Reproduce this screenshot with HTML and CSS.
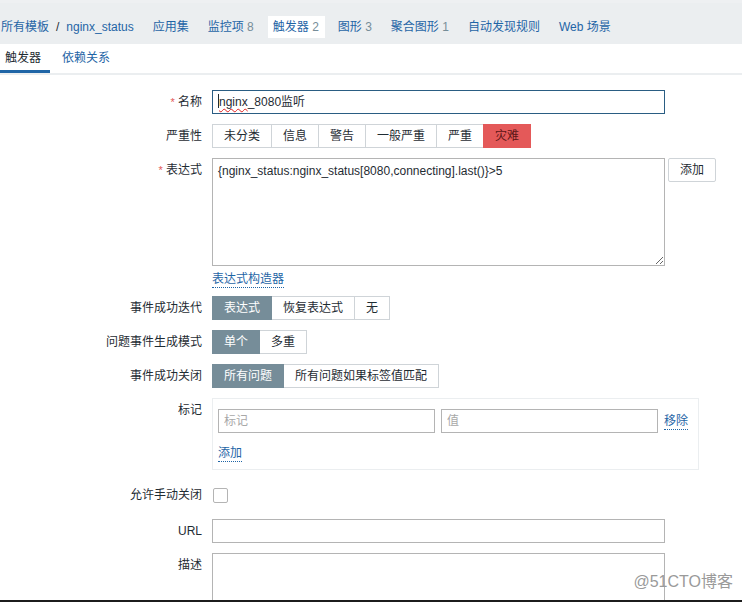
FILE: index.html
```html
<!DOCTYPE html>
<html lang="zh-CN">
<head>
<meta charset="utf-8">
<title>触发器</title>
<link rel="stylesheet" href="styles.css">
</head>
<body>
<div class="page">
  <header class="topnav">
    <a class="crumb">所有模板</a><span class="sep">/</span><a class="crumb">nginx_status</a>
    <a class="nav-item">应用集</a>
    <a class="nav-item">监控项 <span class="count">8</span></a>
    <a class="nav-item active">触发器 <span class="count">2</span></a>
    <a class="nav-item">图形 <span class="count">3</span></a>
    <a class="nav-item">聚合图形 <span class="count">1</span></a>
    <a class="nav-item">自动发现规则</a>
    <a class="nav-item">Web 场景</a>
  </header>

  <nav class="subtabs">
    <span class="subtab current">触发器</span>
    <a class="subtab">依赖关系</a>
  </nav>

  <form class="form">
    <div class="row">
      <label class="lbl"><span class="req">*</span> 名称</label>
      <div class="field">
        <div class="input focused"><span class="caret"></span><span class="misspelled">nginx</span>_8080监听</div>
      </div>
    </div>

    <div class="row">
      <label class="lbl">严重性</label>
      <div class="field">
        <div class="seg">
          <span class="seg-btn">未分类</span><span class="seg-btn">信息</span><span class="seg-btn">警告</span><span class="seg-btn">一般严重</span><span class="seg-btn">严重</span><span class="seg-btn disaster">灾难</span>
        </div>
      </div>
    </div>

    <div class="row row-expr">
      <label class="lbl"><span class="req">*</span> 表达式</label>
      <div class="field">
        <div class="expr-line">
          <textarea class="textarea expr">{nginx_status:nginx_status[8080,connecting].last()}>5</textarea>
          <button type="button" class="btn">添加</button>
        </div>
        <a class="link builder">表达式构造器</a>
      </div>
    </div>

    <div class="row">
      <label class="lbl">事件成功迭代</label>
      <div class="field">
        <div class="seg">
          <span class="seg-btn on">表达式</span><span class="seg-btn">恢复表达式</span><span class="seg-btn">无</span>
        </div>
      </div>
    </div>

    <div class="row">
      <label class="lbl">问题事件生成模式</label>
      <div class="field">
        <div class="seg">
          <span class="seg-btn on">单个</span><span class="seg-btn">多重</span>
        </div>
      </div>
    </div>

    <div class="row">
      <label class="lbl">事件成功关闭</label>
      <div class="field">
        <div class="seg">
          <span class="seg-btn on">所有问题</span><span class="seg-btn">所有问题如果标签值匹配</span>
        </div>
      </div>
    </div>

    <div class="row">
      <label class="lbl">标记</label>
      <div class="field">
        <div class="tagbox">
          <div class="tag-line">
            <input class="input tag" placeholder="标记">
            <input class="input tag" placeholder="值">
            <a class="link">移除</a>
          </div>
          <a class="link add">添加</a>
        </div>
      </div>
    </div>

    <div class="row row-check">
      <label class="lbl">允许手动关闭</label>
      <div class="field"><span class="checkbox"></span></div>
    </div>

    <div class="row">
      <label class="lbl">URL</label>
      <div class="field"><input class="input wide"></div>
    </div>

    <div class="row">
      <label class="lbl">描述</label>
      <div class="field"><textarea class="textarea desc"></textarea></div>
    </div>
  </form>

  <div class="watermark">@51CTO博客</div>
</div>
</body>
</html>
```

FILE: styles.css
```css
* { box-sizing: border-box; }

html, body {
  margin: 0;
  padding: 0;
  background: #ffffff;
}

body {
  font-family: "Liberation Sans", "Noto Sans CJK SC", sans-serif;
  font-size: 12px;
  color: #1f2c33;
}

.page {
  position: relative;
  width: 742px;
  height: 602px;
  overflow: hidden;
  border-bottom: 2px solid #1c1c1c;
}

/* top navigation */
.topnav {
  display: flex;
  align-items: center;
  height: 44px;
  padding: 14px 0 8px 1px;
  background: #ebeef0;
  border-top: 3px solid #eef0f2;
}

.crumb {
  color: #1f65a6;
  line-height: 22px;
  white-space: nowrap;
}

.sep {
  margin: 0 7px;
  color: #1f2c33;
  line-height: 22px;
}

.nav-item {
  margin-left: 8px;
  padding: 0 6px 0 5px;
  line-height: 22px;
  color: #1f65a6;
  white-space: nowrap;
}

.crumb + .nav-item { margin-left: 14px; }

.nav-item.active {
  background: #ffffff;
}

.count { color: #768d99; }

/* subtabs */
.subtabs {
  display: flex;
  height: 31px;
  border-bottom: 2px solid #ebeef0;
}

.subtab {
  padding: 0 9px 0 5px;
  line-height: 28px;
  color: #1f65a6;
}

.subtab.current {
  color: #1f2c33;
  border-bottom: 3px solid #1f65a6;
}

.subtab + .subtab { margin-left: 7px; }

/* form */
.form {
  padding-top: 15px;
}

.row {
  display: grid;
  grid-template-columns: 202px 1fr;
  column-gap: 10px;
  margin-bottom: 10px;
}

.lbl {
  text-align: right;
  line-height: 24px;
  white-space: nowrap;
}

.req {
  color: #e45959;
  font-size: 11px;
}

.field {
  min-width: 0;
}

.input {
  display: block;
  height: 24px;
  padding: 0 5px;
  border: 1px solid #b4b4b4;
  background: #ffffff;
  font: inherit;
  line-height: 22px;
  color: #1f2c33;
  outline: none;
}

.input.focused {
  width: 453px;
  border-color: #2a5d83;
}

.input::placeholder { color: #a8a8a8; }

.caret {
  display: inline-block;
  width: 1px;
  height: 14px;
  vertical-align: -2px;
  background: #1f2c33;
}

.misspelled {
  text-decoration: underline wavy #e02020;
  text-decoration-thickness: 1px;
  text-underline-offset: 2px;
}

.wide { width: 453px; }

/* segmented buttons */
.seg {
  display: flex;
}

.seg-btn {
  height: 24px;
  padding: 0 11px;
  border: 1px solid #cfd4d8;
  line-height: 22px;
  white-space: nowrap;
  background: #ffffff;
  color: #1f2c33;
}

.seg-btn + .seg-btn { margin-left: -1px; }

.seg-btn.on {
  background: #768d99;
  border-color: #768d99;
  color: #ffffff;
  position: relative;
}

.seg-btn.disaster {
  background: #e45959;
  border-color: #e45959;
  color: #5a1616;
  position: relative;
}

/* expression */
.row-expr { margin-bottom: 8px; }

.expr-line {
  display: flex;
  align-items: flex-start;
  gap: 3px;
}

.textarea {
  display: block;
  width: 453px;
  padding: 4px 5px;
  border: 1px solid #b4b4b4;
  font: inherit;
  line-height: 16px;
  color: #1f2c33;
  resize: both;
  outline: none;
}

.expr { height: 108px; }

.desc { height: 120px; }

.btn {
  height: 24px;
  padding: 0 11px;
  border: 1px solid #cfd4d8;
  border-radius: 2px;
  background: #ffffff;
  font: inherit;
  color: #1f2c33;
  line-height: 22px;
}

.link {
  color: #1f65a6;
  border-bottom: 1px dotted #1f65a6;
  line-height: 16px;
  white-space: nowrap;
}

.builder {
  display: inline-block;
  margin-top: 5px;
}

/* tags */
.tagbox {
  width: 487px;
  padding: 10px 5px 7px 5px;
  border: 1px solid #ebeef0;
}

.tag-line {
  display: flex;
  align-items: center;
  gap: 6px;
}

.tag { width: 217px; }

.add {
  display: inline-block;
  margin-top: 12px;
}

/* checkbox */
.row-check {
  margin-top: 13px;
  margin-bottom: 12px;
}

.checkbox {
  display: block;
  width: 15px;
  height: 15px;
  margin: 5px 0 0 1px;
  border: 1px solid #b4b4b4;
  border-radius: 2px;
}

/* watermark */
.watermark {
  position: absolute;
  right: 9px;
  bottom: 8px;
  font-size: 16px;
  color: #9a9a9a;
}
```
